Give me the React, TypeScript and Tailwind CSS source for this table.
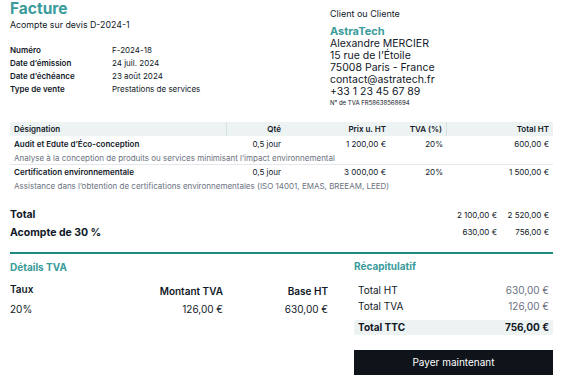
import React from "react";

const font = { fontFamily: "Inter, 'Noto Sans', sans-serif" };

export default function App() {
  return (
    <div className="w-[561px] h-[385px] bg-white text-[#111827] overflow-hidden pl-[10px] pr-[8px]" style={font}>
      {/* Header */}
      <div className="flex">
        <div className="w-[320px]">
          <div className="text-[15.5px] font-bold text-[#3a9b9b] leading-[18px]">Facture</div>
          <div className="text-[8.8px] leading-[12px] mt-[1px]">Acompte sur devis D-2024-1</div>
          <div className="mt-[13px] grid grid-cols-[102px_1fr] text-[8px] leading-[13px]">
            <div className="font-semibold">Numéro</div>
            <div>F-2024-18</div>
            <div className="font-semibold">Date d’émission</div>
            <div>24 juil. 2024</div>
            <div className="font-semibold">Date d’échéance</div>
            <div>23 août 2024</div>
            <div className="font-semibold">Type de vente</div>
            <div>Prestations de services</div>
          </div>
        </div>
        <div className="pt-[8px]">
          <div className="text-[9px] leading-[12px]">Client ou Cliente</div>
          <div className="text-[11px] font-bold text-[#3a9b9b] leading-[14px] mt-[4px]">AstraTech</div>
          <div className="text-[10.5px] leading-[12px]">
            <div>Alexandre MERCIER</div>
            <div>15 rue de l’Étoile</div>
            <div>75008 Paris - France</div>
            <div>contact@astratech.fr</div>
            <div>+33 1 23 45 67 89</div>
          </div>
          <div className="text-[6px] leading-[10px]">N° de TVA FR58638568694</div>
        </div>
      </div>

      {/* Table */}
      <div className="mt-[14px] text-[8px]">
        <div className="grid grid-cols-[217px_58px_105px_57px_1fr] bg-[#edf3f3] h-[14px] items-center font-semibold">
          <div className="pl-[4px] border-r border-[#d8e0e0] h-full flex items-center">Désignation</div>
          <div className="text-right pr-[4px]">Qté</div>
          <div className="text-right pr-[4px]">Prix u. HT</div>
          <div className="text-right pr-[4px] border-r border-[#d8e0e0] h-full flex items-center justify-end">TVA (%)</div>
          <div className="text-right pr-[4px]">Total HT</div>
        </div>
        <div className="grid grid-cols-[217px_58px_105px_57px_1fr] h-[15px] items-center">
          <div className="pl-[4px] font-semibold">Audit et Edute d’Éco-conception</div>
          <div className="text-right pr-[4px]">0,5 jour</div>
          <div className="text-right pr-[4px]">1 200,00 €</div>
          <div className="text-right pr-[4px]">20%</div>
          <div className="text-right pr-[4px]">600,00 €</div>
        </div>
        <div className="pl-[4px] h-[14px] flex items-center text-[#6b7280] border-b border-[#e5e7eb]">
          Analyse à la conception de produits ou services minimisant l’impact environnemental
        </div>
        <div className="grid grid-cols-[217px_58px_105px_57px_1fr] h-[14px] items-center">
          <div className="pl-[4px] font-semibold">Certification environnementale</div>
          <div className="text-right pr-[4px]">0,5 jour</div>
          <div className="text-right pr-[4px]">3 000,00 €</div>
          <div className="text-right pr-[4px]">20%</div>
          <div className="text-right pr-[4px]">1 500,00 €</div>
        </div>
        <div className="pl-[4px] h-[14px] flex items-center text-[#6b7280]">
          Assistance dans l’obtention de certifications environnementales (ISO 14001, EMAS, BREEAM, LEED)
        </div>
      </div>

      {/* Totals */}
      <div className="mt-[13px]">
        <div className="flex items-center h-[18px]">
          <div className="flex-1 text-[10.5px] font-bold">Total</div>
          <div className="w-[60px] text-right text-[8px]">2 100,00 €</div>
          <div className="w-[56px] text-right text-[8px] pr-[4px]">2 520,00 €</div>
        </div>
        <div className="flex items-center h-[18px]">
          <div className="flex-1 text-[10.5px] font-bold">Acompte de 30 %</div>
          <div className="w-[60px] text-right text-[8px] -mt-[3px]">630,00 €</div>
          <div className="w-[56px] text-right text-[8px] pr-[4px] -mt-[3px]">756,00 €</div>
        </div>
      </div>
      <div className="mt-[10px] h-[1.5px] bg-[#1f8a80]" />

      {/* Bottom */}
      <div className="flex mt-[6px]">
        <div className="w-[318px]">
          <div className="text-[10px] font-bold text-[#3a9b9b] leading-[14px]">Détails TVA</div>
          <div className="grid grid-cols-[1fr_110px_105px] text-[10px] mt-[10px]">
            <div className="font-semibold leading-[14px] -mt-[2px]">Taux</div>
            <div className="font-semibold text-right leading-[14px]">Montant TVA</div>
            <div className="font-semibold text-right leading-[14px]">Base HT</div>
            <div className="mt-[4px] leading-[14px]">20%</div>
            <div className="mt-[4px] text-right leading-[14px]">126,00 €</div>
            <div className="mt-[4px] text-right leading-[14px]">630,00 €</div>
          </div>
        </div>
        <div className="ml-[26px] flex-1">
          <div className="text-[10px] font-bold text-[#3a9b9b] leading-[14px] -mt-[1px]">Récapitulatif</div>
          <div className="mt-[10px] text-[10px] px-[4px]">
            <div className="flex justify-between h-[16px] items-center">
              <span>Total HT</span>
              <span className="text-[#6b7280]">630,00 €</span>
            </div>
            <div className="flex justify-between h-[16px] items-center">
              <span>Total TVA</span>
              <span className="text-[#6b7280]">126,00 €</span>
            </div>
          </div>
          <div className="mt-[5px] flex justify-between items-center h-[15px] px-[4px] bg-[#edf3f3] rounded-[2px] text-[10px] font-bold">
            <span>Total TTC</span>
            <span>756,00 €</span>
          </div>
          <div className="mt-[15px] h-[25px] bg-[#0f141b] text-white text-[10px] flex items-center justify-center">
            Payer maintenant
          </div>
        </div>
      </div>
    </div>
  );
}
